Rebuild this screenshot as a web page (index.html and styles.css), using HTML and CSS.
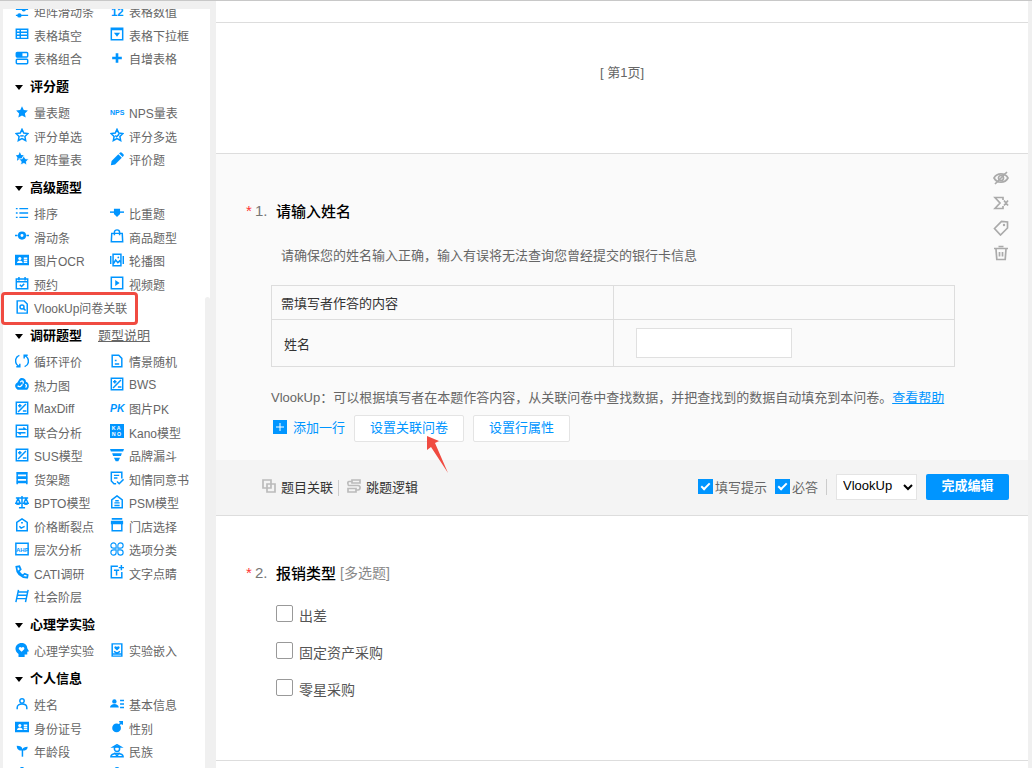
FILE: index.html
```html
<!DOCTYPE html>
<html lang="zh-CN">
  <head>
    <meta charset="UTF-8" />
    <meta name="viewport" content="width=device-width, initial-scale=1.0" />
    <title>问卷编辑</title>
    <link rel="stylesheet" href="styles.css">
  </head>
  <body>
    <!-- icons used more than once -->
    <svg class="sprite" aria-hidden="true">
      <symbol id="i-plusminus" viewBox="0 0 16 16"><path d="M1.5 1.5h13v13h-13zM3.5 12.5l9-9M3.5 5.5h4M5.5 3.5v4M9 11.5h4" /></symbol>
      <symbol id="i-idcard" viewBox="0 0 16 16"><path class="fill" d="M0 2h16v12H0z" /><circle class="white" cx="5.5" cy="6.3" r="1.8" /><path class="white" d="M2.3 11.5c0-4 6.4-4 6.4 0z" /><path class="cut" d="M10 6h4M10 8.3h4M10 10.6h4" /></symbol>
      <symbol id="i-star" viewBox="0 0 16 16"><path d="M8 1.5l2 4.3 4.7.6-3.4 3.2.9 4.7L8 12l-4.2 2.3.9-4.7-3.4-3.2 4.7-.6z" /></symbol>
    </svg>

    <aside class="sidebar">
      <div class="panel">
        <div class="type-list top-list">
          <a href="#"><svg viewBox="0 0 16 16"><path d="M1 6h14M1 13h14" /><circle class="fill" cx="10" cy="6" r="2.5" /><circle class="fill" cx="5" cy="13" r="2.5" /></svg>矩阵滑动条</a>
          <a href="#"><svg viewBox="0 0 16 16"><text class="num" x="1" y="14">12</text></svg>表格数值</a>
          <a href="#"><svg viewBox="0 0 16 16"><path d="M1.500 2.500h13v10.500h-13zM1.500 6h13M1.500 9.500h13M6 2.500v10" /></svg>表格填空</a>
          <a href="#"><svg viewBox="0 0 16 16"><path d="M1.500 1.500h13v13h-13zM1.500 3h13" /><path class="fill" d="M4.500 6.500h7L8 11z" /></svg>表格下拉框</a>
          <a href="#"><svg viewBox="0 0 16 16"><rect x="1.500" y="1.800" width="13" height="5" rx="1" /><rect x="1.500" y="9.500" width="13" height="5" rx="1" /><path class="fill" d="M1.500 2h7v5h-7z" /></svg>表格组合</a>
          <a href="#"><svg viewBox="0 0 16 16"><path class="bold" d="M8 2.500v11M2.500 8h11" /></svg>自增表格</a>
        </div>

        <h3>评分题</h3>
        <div class="type-list">
          <a href="#"><svg viewBox="0 0 16 16"><use class="fill" href="#i-star" /></svg>量表题</a>
          <a href="#"><svg class="wide" viewBox="0 0 16 16"><text class="word" x="0" y="11">NPS</text></svg>NPS量表</a>
          <a href="#"><svg viewBox="0 0 16 16"><use href="#i-star" /><path d="M6 9h4" /></svg>评分单选</a>
          <a href="#"><svg viewBox="0 0 16 16"><use href="#i-star" /><path d="M6 8.500l1.500 1.500L10.500 7" /></svg>评分多选</a>
          <a href="#"><svg viewBox="0 0 16 16"><path class="fill" d="M5.500 0l1.600 3.300 3.600.4-2.500 2.500.6 3.700-3.300-1.800-3.300 1.800.6-3.700L1 3.700l3-.4z" /><path class="fill edge" d="M10 4l1.800 3.600 4 .5-2.900 2.800.7 4-3.600-1.900-3.600 1.900.7-4-2.900-2.800 4-.5z" /></svg>矩阵量表</a>
          <a href="#"><svg viewBox="0 0 16 16"><path class="fill" d="M1 15l.8-4.800L9.500 2.500l4 4-7.700 7.700zM10.400 1.600l1.200-1q1-.8 2 .2l1.700 1.700q1 1 .1 2l-1 1.100z" /></svg>评价题</a>
        </div>

        <h3>高级题型</h3>
        <div class="type-list">
          <a href="#"><svg viewBox="0 0 16 16"><path d="M5 3h10M5 8h10M5 13h10M1 3h2M1 8h2M1 13h2" /></svg>排序</a>
          <a href="#"><svg viewBox="0 0 16 16"><path d="M0 7h16" /><path class="fill" d="M4.500 3h7v6L8 12.500 4.500 9z" /></svg>比重题</a>
          <a href="#"><svg viewBox="0 0 16 16"><path d="M0 7.500h3M13 7.500h3" /><circle class="ring" cx="8" cy="7.500" r="3.200" /></svg>滑动条</a>
          <a href="#"><svg viewBox="0 0 16 16"><path d="M2 5h12l.5 9.500h-13zM5 7V4c0-4 6-4 6 0v3" /></svg>商品题型</a>
          <a href="#"><svg><use href="#i-idcard" /></svg>图片OCR</a>
          <a href="#"><svg viewBox="0 0 16 16"><path d="M3.500 1.500h9v13h-9zM.800 3.500v9M15.200 3.500v9M4 12l2.500-4 2.500 3 2-2 1.500 2" /><circle class="fill" cx="9.500" cy="5" r="1" /></svg>轮播图</a>
          <a href="#"><svg viewBox="0 0 16 16"><path d="M1.500 3.500h13v11h-13zM1.500 6.500h13M4.500 1v4M11.500 1v4M5.500 10l2 2 3-3" /></svg>预约</a>
          <a href="#"><svg viewBox="0 0 16 16"><path d="M1.500 1.500h13v13h-13z" /><path class="fill" d="M6 4.500l5 3.500-5 3.500z" /></svg>视频题</a>
          <a href="#" class="lookup"><svg viewBox="0 0 16 16"><path d="M2.500 1h8l3.500 3.500V15H2.500z" /><circle cx="8" cy="8" r="2.300" /><path d="M9.600 9.600l2.500 2.500" /></svg>VlookUp问卷关联</a>
        </div>

        <h3>调研题型<a href="#" class="guide">题型说明</a></h3>
        <div class="type-list">
          <a href="#"><svg viewBox="0 0 16 16"><path d="M5 1.500C-1 4-.5 12 5 14.200M1.500 14.500h4v-3.500M11 14.500C17 12 16.500 4 11 1.800M14.500 1.500h-4V5" /></svg>循环评价</a>
          <a href="#"><svg viewBox="0 0 16 16"><path d="M2.500 1.500h7.500l3.500 3.500v9.500h-11zM5.500 11.500h5M5.500 7.500h2" /></svg>情景随机</a>
          <a href="#"><svg viewBox="0 0 16 16"><path class="fill" d="M5 2.500c2-3 8-1 7.500 3 3.500 1 4.500 6 1.500 9H3c-4-2-3.500-7-.5-8z" /><path class="cut" d="M3 10c2 2 4 1 5.500-1.500M6 6c2-3 4.500-1 3 1.500M11.500 8.500c2 0 2 2.500.5 3.500" /></svg>热力图</a>
          <a href="#"><svg><use href="#i-plusminus" /></svg>BWS</a>
          <a href="#"><svg><use href="#i-plusminus" /></svg>MaxDiff</a>
          <a href="#"><svg class="wide" viewBox="0 0 16 16"><text class="pk" x="0" y="13">PK</text></svg>图片PK</a>
          <a href="#"><svg viewBox="0 0 16 16"><path d="M1.500 1.500h13v13h-13zM4 6h8L9.500 4M12 10H4l2.500 2" /></svg>联合分析</a>
          <a href="#"><svg viewBox="0 0 16 16"><path class="fill" d="M0 0h16v16H0z" /><text class="kano" x="2" y="7">K A</text><text class="kano" x="2" y="14">N O</text></svg>Kano模型</a>
          <a href="#"><svg><use href="#i-plusminus" /></svg>SUS模型</a>
          <a href="#"><svg viewBox="0 0 16 16"><path class="fill" d="M0 1h16l-1 3H1zM2.500 6h11l-1 3h-9zM4.500 11h7l-2 4h-3z" /></svg>品牌漏斗</a>
          <a href="#"><svg viewBox="0 0 16 16"><path d="M2.500 1v14M13.500 1v14" /><path class="bold" d="M2 2.500h12M2 7.500h12M2 12.500h12" /></svg>货架题</a>
          <a href="#"><svg viewBox="0 0 16 16"><path d="M7 14.500H4.500l-3-3v-10h12v7M4.500 5h6M4.500 8h4M8 12l2.500 2.500 5-5" /></svg>知情同意书</a>
          <a href="#"><svg viewBox="0 0 16 16"><path d="M8 1v13M4.500 14.500h7M1 3.500h14M3.500 4L1 9.500h5zM12.500 4L10 9.500h5z" /><path class="fill" d="M0 9h7q-3.500 5-7 0M9 9h7q-3.500 5-7 0" /></svg>BPTO模型</a>
          <a href="#"><svg viewBox="0 0 16 16"><path d="M2 5.500L8 1l6 4.500v9H2zM5 12h6M5 9h6M6 6.500h4" /></svg>PSM模型</a>
          <a href="#"><svg viewBox="0 0 16 16"><path d="M2 5L8 1l6 4v9.500H2zM5 9.500l2 2 4-2M7 5.500h2" /></svg>价格断裂点</a>
          <a href="#"><svg viewBox="0 0 16 16"><path d="M2.500 6v8.500h11V6" /><path class="fill" d="M2 0h12v2H2zM1 3h14v4H1z" /></svg>门店选择</a>
          <a href="#"><svg viewBox="0 0 16 16"><path d="M1 1.500h14v13H1z" /><text class="ahp" x="1" y="11">AHP</text></svg>层次分析</a>
          <a href="#"><svg viewBox="0 0 16 16"><path class="thin" d="M7 4a3 3 0 1 0-3 3h3zM9 4a3 3 0 1 1 3 3H9zM7 12a3 3 0 1 1-3-3h3zM9 12a3 3 0 1 0 3-3H9z" /></svg>选项分类</a>
          <a href="#"><svg viewBox="0 0 16 16"><path class="thick" d="M1.500 2C2 10 6 14 14 14.500l.5-3-3.500-1.500-2 2C6.500 10.500 5 9 4.500 7l2-2L5 1.500z" /></svg>CATI调研</a>
          <a href="#"><svg viewBox="0 0 16 16"><path d="M9 1.500H1.500v13h12V8M4.500 6h6M7.500 6v6M13 0v6M10 3h6" /></svg>文字点睛</a>
          <a href="#"><svg viewBox="0 0 16 16"><path d="M4 1L1 15M15 1l-3 14M3.500 3.500H14M3 7.200h10.500M2.500 11h10" /></svg>社会阶层</a>
        </div>

        <h3>心理学实验</h3>
        <div class="type-list">
          <a href="#"><svg viewBox="0 0 16 16"><path class="fill" d="M4 16v-3.500C-2.500 8 1 0 7.500 0 12 0 14 3 14 6l2 3.500-2 .5v3h-3v3z" /><path class="white" d="M7.500 10L4.500 7c-1-2 1.500-3.500 3-1.500C9 3.500 11.500 5 10.500 7z" /></svg>心理学实验</a>
          <a href="#"><svg viewBox="0 0 16 16"><path d="M2.500 1h11v14h-11zM4.500 9.500l3.500 2 3.500-2M3 12.500h10" /><path class="fill" d="M8 8.500L5.200 6c-1-2 1.500-3 2.800-1.500C9.300 3 11.800 4 10.800 6z" /></svg>实验嵌入</a>
        </div>

        <h3>个人信息</h3>
        <div class="type-list">
          <a href="#"><svg viewBox="0 0 16 16"><circle cx="8" cy="4.500" r="2.500" /><path d="M2.500 14V12c0-5.500 11-5.500 11 0v2" /></svg>姓名</a>
          <a href="#"><svg viewBox="0 0 16 16"><circle class="fill" cx="5" cy="5" r="2.500" /><path class="fill" d="M0 12c0-5.500 10-5.500 10 0z" /><path d="M11.500 4H16M11.500 8H16M11.500 12H16" /></svg>基本信息</a>
          <a href="#"><svg><use href="#i-idcard" /></svg>身份证号</a>
          <a href="#"><svg viewBox="0 0 16 16"><circle class="fill" cx="7.500" cy="9" r="5" /><path d="M10 6l4-4M10.500 2H14v3.500" /></svg>性别</a>
          <a href="#"><svg viewBox="0 0 16 16"><path d="M8.500 6v8.500" /><path class="fill" d="M8.500 7.500C3 8 2 4.500 2 2c4 0 6 1 6.500 4C9 4 11 3 14.500 3c0 3-2 4.500-6 4.500z" /></svg>年龄段</a>
          <a href="#"><svg viewBox="0 0 16 16"><circle cx="8" cy="5.500" r="3" /><path d="M3.500 3.500h9L8 .800zM1 14.500c0-5 14-5 14 0zM5 10l3 3.500 3-3.500" /></svg>民族</a>
          <a href="#"><svg viewBox="0 0 16 16"><path d="M8 0L1 7v7h14V7z" /></svg></a>
          <a href="#"><svg viewBox="0 0 16 16"><circle class="fill" cx="8" cy="3" r="3" /><path d="M2 15c0-8 12-8 12 0" /></svg></a>
        </div>
      </div>
      <div class="thumb"></div>
    </aside>

    <main class="editor">
      <div class="strip"></div>
      <section class="page-break">[ 第1页]</section>

      <section class="question active">
        <div class="question-body">
          <div class="question-content">
            <h2><span class="star">*</span><span class="no">1.</span>请输入姓名</h2>
            <p class="hint">请确保您的姓名输入正确，输入有误将无法查询您曾经提交的银行卡信息</p>
            <table class="fields">
              <tr class="head">
                <td>需填写者作答的内容</td>
                <td></td>
              </tr>
              <tr class="row">
                <td><label for="name">姓名</label></td>
                <td><input id="name" type="text"></td>
              </tr>
            </table>
            <p class="note">VlookUp：可以根据填写者在本题作答内容，从关联问卷中查找数据，并把查找到的数据自动填充到本问卷。<a href="#">查看帮助</a></p>
            <div class="row-actions">
              <button class="add"><svg viewBox="0 0 14 14"><path class="fill" d="M0 0h14v14H0z" /><path class="cut" d="M7 3v8M3 7h8" /></svg>添加一行</button>
              <button class="plain link-survey">设置关联问卷
                <svg class="arrow" viewBox="0 0 23 38" aria-hidden="true"><path d="M1 0l12 5-4 2 13 30L5 11l-4 3z" /></svg>
              </button>
              <button class="plain">设置行属性</button>
            </div>
          </div>
          <div class="side-tools">
            <button aria-label="隐藏"><svg viewBox="0 0 16 16"><path d="M1 8c3-5.500 11-5.500 14 0-3 5.500-11 5.500-14 0zM2 14L14 2" /><circle cx="8" cy="8" r="2.500" /></svg></button>
            <button aria-label="公式"><svg viewBox="0 0 16 16"><path d="M10 5V2.500H2L7 8l-5 5.500h8V11M11 5.500l4 5M15 5.500l-4 5" /></svg></button>
            <button aria-label="标签"><svg viewBox="0 0 16 16"><path d="M1.500 8.500l7-7 6 .5v6l-7 7z" /><circle class="dot" cx="11" cy="5" r="1.200" /></svg></button>
            <button aria-label="删除"><svg viewBox="0 0 16 16"><path d="M1 3.500h14M5.500 1.500h5M3 4l.8 10.500h8.400L13 4M6.500 7v4.500M9.500 7v4.500" /></svg></button>
          </div>
        </div>

        <div class="toolbar">
          <button class="tool"><svg viewBox="0 0 14 14"><path d="M1 1h8v8H1zM5 5h8v8H5z" /></svg>题目关联</button>
          <span class="sep"></span>
          <button class="tool"><svg viewBox="0 0 14 14"><path d="M5 1h8v3H5zM5 2.500H2c-2 0-1 4 0 4h9c3 0 2.500 4.500 0 4.500H9M1 9.500h8v3.500H1z" /></svg>跳题逻辑</button>
          <div class="settings">
            <label class="opt"><input type="checkbox" checked>填写提示</label>
            <label class="opt"><input type="checkbox" checked>必答</label>
            <span class="sep"></span>
            <select aria-label="题型"><option>VlookUp</option></select>
            <button class="done">完成编辑</button>
          </div>
        </div>
      </section>

      <section class="question">
        <h2><span class="star">*</span><span class="no">2.</span>报销类型<span class="kind">[多选题]</span></h2>
        <div class="choices">
          <label><input type="checkbox">出差</label>
          <label><input type="checkbox">固定资产采购</label>
          <label><input type="checkbox">零星采购</label>
        </div>
      </section>
    </main>
  </body>
</html>
```
FILE: styles.css
```css
*,
*::before,
*::after {
  margin: 0;
  padding: 0;
  box-sizing: border-box;
}
body {
  display: flex;
  height: 100vh;
  overflow: hidden;
  background: #f0f0f0;
  border-top: 1px solid #c8c8c8;
  color: #666;
  font-family: "Liberation Sans", "Noto Sans CJK SC", sans-serif;
  font-size: 13px;
}
button,
input,
select {
  font: inherit;
}
button {
  border: none;
  background: none;
  cursor: pointer;
}
svg {
  fill: none;
  stroke: #0095ff;
  stroke-width: 1.7;
  flex: none;
}
.sprite {
  position: absolute;
  width: 0;
  height: 0;
}
.fill {
  fill: #0095ff;
  stroke: none;
}
.white {
  fill: #fff;
  stroke: none;
}
.cut {
  stroke: #fff;
  stroke-width: 1.5;
}
.edge {
  stroke: #fff;
  stroke-width: 1;
}
.bold,
.ring {
  stroke-width: 3;
}
.thick {
  stroke-width: 2;
}
.thin {
  stroke-width: 1.3;
}
svg text {
  fill: #0095ff;
  stroke: none;
  font-weight: bold;
}
svg .num {
  font-size: 13px;
}
svg .word {
  font-size: 8px;
}
svg .pk {
  font-size: 12px;
  font-style: italic;
}
svg .kano {
  font-size: 6px;
  fill: #fff;
}
svg .ahp {
  font-size: 7px;
}

/* left panel */
.sidebar {
  position: relative;
  flex: none;
  width: 210px;
  margin-top: 8px;
  padding-left: 3px;
  overflow: hidden;
}
.panel {
  background: #fff;
}
.thumb {
  position: absolute;
  top: 288px;
  right: 0;
  bottom: 0;
  width: 5px;
  border-radius: 3px 3px 0 0;
  background: #f0f0f0;
}
.type-list {
  display: grid;
  grid-template-columns: 95px 1fr;
  grid-auto-rows: 24px 23px;
  padding-left: 12px;
}
.top-list {
  margin-top: -8px;
}
.type-list a {
  display: flex;
  align-items: center;
  gap: 5px;
  padding-bottom: 3px;
  color: #666;
  font-size: 12px;
  text-decoration: none;
  white-space: nowrap;
}
.type-list svg {
  width: 14px;
  height: 14px;
  margin-bottom: 2px;
}
.type-list .wide {
  overflow: visible;
}
.sidebar h3 {
  display: flex;
  align-items: center;
  height: 30px;
  padding: 0 0 4px 12px;
  color: #000;
  font-size: 13px;
}
.sidebar h3::before {
  content: "";
  margin: 4px 7px 0 0;
  border: 4px solid transparent;
  border-top: 5px solid #000;
  border-bottom: none;
}
.guide {
  margin-left: 16px;
  color: #666;
  font-weight: normal;
}
.lookup {
  position: relative;
}
.lookup::after {
  content: "";
  position: absolute;
  top: -5px;
  bottom: -4px;
  left: -14px;
  width: 137px;
  border: 3px solid #f04b41;
  border-radius: 4px;
}

/* right side */
.editor {
  flex: 1;
  margin: 0 4px 0 6px;
  background: #fff;
}
.strip {
  height: 22px;
  border-bottom: 1px solid #ddd;
}
.page-break {
  padding: 40px 0 70px;
  border-bottom: 1px solid #ddd;
  line-height: 20px;
  text-align: center;
}
.question {
  padding: 44px 55px 59px 30px;
  border-bottom: 1px solid #ddd;
}
.question.active {
  padding: 0;
  background: #fafafa;
}
.question-body {
  display: flex;
}
.question-content {
  flex: 1;
  padding: 44px 0 18px 30px;
}
.question h2 {
  display: flex;
  align-items: center;
  height: 24px;
  color: #000;
  font-size: 15px;
  font-weight: 500;
}
.star {
  width: 9px;
  color: #f33;
  font-weight: normal;
}
.no {
  width: 21px;
  color: #777;
  font-weight: normal;
}
.kind {
  margin-left: 4px;
  color: #888;
  font-size: 14px;
  font-weight: normal;
}
.hint {
  padding: 24px 0 19px 35px;
  line-height: 20px;
}
.fields {
  width: calc(100% - 25px);
  margin-left: 25px;
  border-collapse: collapse;
  table-layout: fixed;
  color: #333;
}
.fields td {
  border: 1px solid #ddd;
}
.head td {
  height: 34px;
  padding-left: 9px;
}
.row td {
  height: 47px;
  padding-left: 12px;
}
.row td + td {
  padding-left: 22px;
}
.fields input {
  display: block;
  width: 156px;
  height: 30px;
  border: 1px solid #e0e0e0;
  background: #fff;
}
.note {
  padding: 21px 0 7px 25px;
  line-height: 20px;
  white-space: nowrap;
}
.note a {
  color: #0095ff;
}
.row-actions {
  display: flex;
  gap: 9px;
  padding-left: 27px;
}
.row-actions button {
  height: 27px;
  padding-bottom: 4px;
  color: #0095ff;
}
.row-actions .add {
  display: flex;
  align-items: center;
  gap: 6px;
}
.add svg {
  width: 14px;
  height: 14px;
}
.add .cut {
  stroke-width: 1;
}
.row-actions .plain {
  padding: 0 15px 4px;
  border: 1px solid #e4e4e4;
  border-radius: 2px;
  background: #fff;
}
.link-survey {
  position: relative;
}
.link-survey .arrow {
  position: absolute;
  top: 20px;
  left: 71px;
  width: 23px;
  height: 38px;
  fill: #f04b41;
  stroke: none;
}
.side-tools {
  display: flex;
  flex-direction: column;
  align-items: flex-end;
  gap: 9px;
  width: 73px;
  padding: 16px 19px 0 0;
}
.side-tools svg {
  display: block;
  width: 16px;
  height: 16px;
  stroke: #aaa;
}
.side-tools .dot {
  fill: #aaa;
  stroke: none;
}
.toolbar {
  display: flex;
  align-items: center;
  height: 55px;
  padding: 0 19px 0 46px;
  background: #f4f4f4;
}
.tool {
  display: flex;
  align-items: center;
  gap: 5px;
  padding-bottom: 3px;
  color: #333;
}
.tool svg {
  width: 14px;
  height: 14px;
  stroke: #bbb;
}
.sep {
  width: 1px;
  height: 16px;
  margin: 0 8px 0 5px;
  background: #ccc;
}
.settings {
  display: flex;
  align-items: center;
  padding-bottom: 2px;
  margin-left: auto;
}
.opt {
  display: flex;
  align-items: center;
  gap: 2px;
  margin-right: 8px;
}
.opt input {
  appearance: none;
  width: 15px;
  height: 15px;
  background: #fff;
}
.opt input:checked {
  background: #0095ff;
}
.opt input:checked::before {
  content: "";
  display: block;
  width: 9px;
  height: 5px;
  margin: 4px 0 0 3px;
  border: solid #fff;
  border-width: 0 0 2px 2px;
  transform: rotate(-45deg);
}
.settings .sep {
  margin: 0 9px 0 0;
}
.settings select {
  width: 81px;
  height: 26px;
  padding: 0 0 2px 2px;
  border: 1px solid #e4e4e4;
  background: #fff;
  color: #000;
}
.done {
  width: 83px;
  height: 26px;
  margin-left: 9px;
  padding-bottom: 4px;
  border-radius: 2px;
  background: #0095ff;
  color: #fff;
  font-weight: bold;
}
.choices {
  display: flex;
  flex-direction: column;
  gap: 13px;
  padding: 19px 0 0 30px;
}
.choices label {
  display: flex;
  align-items: center;
  gap: 6px;
  height: 24px;
  color: #555;
  font-size: 14px;
}
.choices input {
  appearance: none;
  width: 17px;
  height: 17px;
  margin-bottom: 4px;
  border: 1px solid #999;
  border-radius: 2px;
  background: #fff;
}
```
